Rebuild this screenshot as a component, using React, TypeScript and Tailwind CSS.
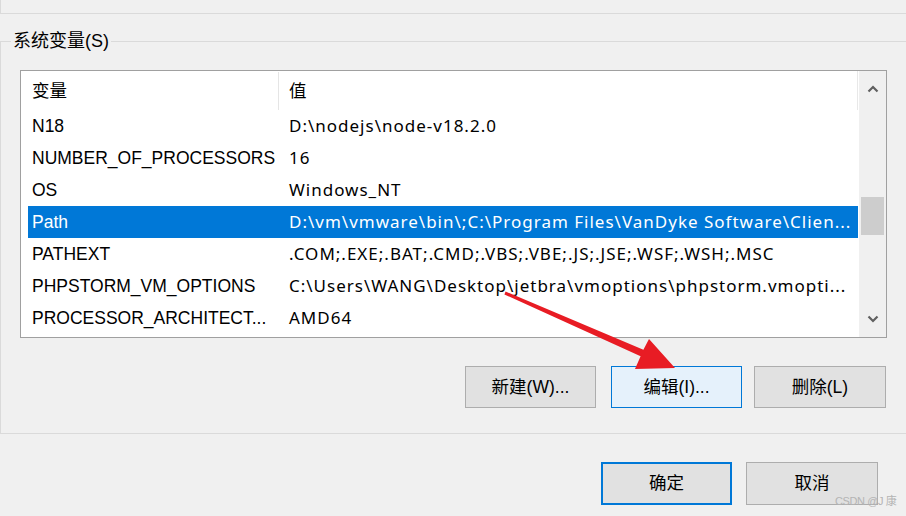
import React from "react";

const rows = [
  ["N18", "D:\\nodejs\\node-v18.2.0"],
  ["NUMBER_OF_PROCESSORS", "16"],
  ["OS", "Windows_NT"],
  ["Path", "D:\\vm\\vmware\\bin\\;C:\\Program Files\\VanDyke Software\\Clien..."],
  ["PATHEXT", ".COM;.EXE;.BAT;.CMD;.VBS;.VBE;.JS;.JSE;.WSF;.WSH;.MSC"],
  ["PHPSTORM_VM_OPTIONS", "C:\\Users\\WANG\\Desktop\\jetbra\\vmoptions\\phpstorm.vmopti..."],
  ["PROCESSOR_ARCHITECT...", "AMD64"],
];

const Chevron = ({ down }: { down?: boolean }) => (
  <svg width="12" height="8" viewBox="0 0 12 8">
    <polyline
      points={down ? "1.5,1.5 6,6 10.5,1.5" : "1.5,6.5 6,2 10.5,6.5"}
      fill="none"
      stroke="#606060"
      strokeWidth="2.2"
    />
  </svg>
);

const App = () => {
  return (
    <div className="relative w-[906px] h-[516px] overflow-hidden bg-[#f0f0f0] text-black font-['Liberation_Sans','Noto_Sans_CJK_SC',sans-serif]">
      {/* upper group (cut off) */}
      <div className="h-[14px] border-l border-b border-[#dadada]" />

      {/* system variables */}
      <fieldset className="mt-[17px] border-l border-t border-b border-[#dadada] pb-[25px]">
        <legend className="ml-[10px] px-[2px] text-[18px] leading-[20px]">系统变量(S)</legend>

        <div className="mt-[19px] ml-[19px] w-[867px] h-[268px] border border-[#a0a0a0] bg-white flex text-[17.5px]">
          <div className="w-[838px] flex flex-col">
            {/* header */}
            <div className="h-[39px] w-[837px] flex items-center border-r border-[#e8e8e8] pt-[1px]">
              <div className="w-[257px] pl-[11px]">变量</div>
              <div className="w-px h-full bg-[#e5e5e5]" />
              <div className="pl-[10px]">值</div>
            </div>
            {rows.map(([name, value]) => {
              const sel = name === "Path";
              return (
                <div
                  key={name}
                  className={`h-[32px] ml-[7px] w-[830px] flex items-center whitespace-nowrap ${
                    sel ? "bg-[#0078d7] text-white" : ""
                  }`}
                >
                  <div className="w-[257px] pl-[4px] overflow-hidden">{name}</div>
                  <div className="pl-[4px] overflow-hidden font-['Noto_Sans','Liberation_Sans',sans-serif] text-[17px] tracking-[1px]">
                    {value}
                  </div>
                </div>
              );
            })}
          </div>

          {/* scrollbar */}
          <div className="w-[27px] bg-[#f0f0f0] flex flex-col">
            <div className="h-[36px] flex items-center justify-center">
              <Chevron />
            </div>
            <div className="flex-1">
              <div className="mt-[90px] mx-[2px] h-[38px] bg-[#cdcdcd]" />
            </div>
            <div className="h-[36px] flex items-center justify-center">
              <Chevron down />
            </div>
          </div>
        </div>

        <div className="mt-[28px] flex justify-end pr-[20px] text-[17.5px]">
          <button className="w-[131px] h-[42px] bg-[#e1e1e1] border border-[#adadad]">新建(W)...</button>
          <button className="ml-[15px] w-[131px] h-[42px] bg-[#e5f1fb] border border-[#0078d7]">编辑(I)...</button>
          <button className="ml-[12px] w-[132px] h-[42px] bg-[#e1e1e1] border border-[#adadad]">删除(L)</button>
        </div>
      </fieldset>

      <div className="mt-[28px] flex justify-end pr-[28px] text-[17.5px]">
        <button className="w-[131px] h-[43px] bg-[#e1e1e1] border-2 border-[#0078d7]">确定</button>
        <button className="ml-[14px] w-[132px] h-[43px] bg-[#e1e1e1] border border-[#adadad]">取消</button>
      </div>

      {/* watermark */}
      <div className="absolute left-[835px] top-[493px] text-[11px] tracking-[-0.4px] text-[#b4b4b4] whitespace-nowrap">
        CSDN @J 康
      </div>

      {/* red annotation arrow */}
      <svg className="absolute inset-0 pointer-events-none" width="906" height="516" viewBox="0 0 906 516">
        <polygon
          points="505.6,291.6 643.4,349.8 649,339 675,368 635,369 640.6,356.2 504.4,294.4"
          fill="#e81c24"
        />
      </svg>
    </div>
  );
};

export default App;
